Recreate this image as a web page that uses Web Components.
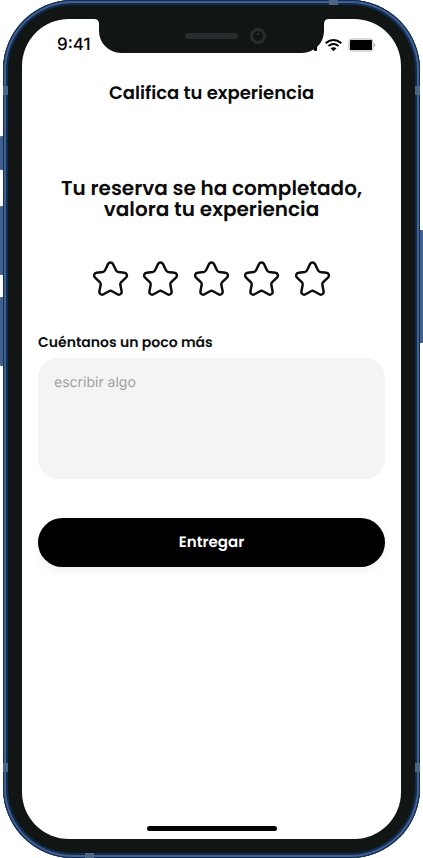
<!DOCTYPE html>
<html lang="es">
<head>
<meta charset="utf-8">
<meta name="viewport" content="width=device-width, initial-scale=1">
<title>Califica tu experiencia</title>
<style>
  body { margin: 0; background: #fff; color: #0c0c0c; font-family: Poppins, Inter, "Noto Sans", sans-serif; text-rendering: geometricPrecision; }
</style>
</head>
<body>
<phone-frame>
  <status-bar slot="status">9:41</status-bar>
  <rating-screen>
    <span slot="title">Califica tu experiencia</span>
    <span slot="message">Tu reserva se ha completado, valora tu experiencia</span>
    <star-rating></star-rating>
    <note-field label="Cuéntanos un poco más" placeholder="escribir algo"></note-field>
    <pill-button>Entregar</pill-button>
  </rating-screen>
</phone-frame>

<template id="phone-frame">
  <style>
    :host { display: block; padding: 0 3px; position: relative; }
    .case {
      box-sizing: border-box; min-height: 100vh; padding: 19px; border-radius: 70px;
      display: flex; position: relative; background: #111615;
      box-shadow: inset 0 0 0 1px #122c50, inset 0 0 0 3px #416190, inset 0 0 0 5px #122b50;
    }
    .screen {
      flex: 1; min-width: 0; display: flex; flex-direction: column;
      background: #fff; border-radius: 47px; position: relative;
    }
    .notch { position: absolute; top: 0; left: 50%; margin-left: -118px; width: 235px; height: 34px; }
    .home { width: 130px; height: 5px; border-radius: 3px; background: #000; margin: auto auto 8px; }
    .key { position: absolute; width: 3px; background: #416190; }
    .left { left: 0; border-radius: 1px 0 0 1px; }
    .right { right: 0; border-radius: 0 1px 1px 0; }
    .mute { top: 136px; height: 34px; }
    .up { top: 206px; height: 69px; }
    .down { top: 297px; height: 69px; }
    .power { top: 230px; height: 113px; }
    .band { position: absolute; background: #4b6583; }
    .v { width: 5px; height: 9px; }
    .h { width: 9px; height: 5px; }
    .l { left: 0; } .r { right: 0; }
    .hi { top: 86px; } .lo { bottom: 86px; }
    .t { top: 0; right: 82px; } .b { bottom: 0; left: 82px; }
  </style>
  <i class="key left mute"></i><i class="key left up"></i><i class="key left down"></i><i class="key right power"></i>
  <div class="case">
    <i class="band v l hi"></i><i class="band v r hi"></i><i class="band v l lo"></i><i class="band v r lo"></i>
    <i class="band h t"></i><i class="band h b"></i>
    <div class="screen">
      <slot name="status"></slot>
      <svg class="notch" viewBox="0 0 235 34" aria-hidden="true">
        <path d="M0 0Q5 0 5 5V12A22 22 0 0 0 27 34H208A22 22 0 0 0 230 12V5Q230 0 235 0Z" fill="#111615"/>
        <rect x="91" y="14" width="53" height="6" rx="3" fill="#292c2d"/>
        <circle cx="164" cy="17" r="6.5" fill="#111615" stroke="#292c2d" stroke-width="3"/>
        <circle cx="164" cy="15" r="1" fill="#34383a"/>
      </svg>
      <slot></slot>
      <div class="home"></div>
    </div>
  </div>
</template>

<template id="status-bar">
  <style>
    :host { display: flex; justify-content: space-between; align-items: center; height: 20px; padding: 16px 24px 0 35px; font: 500 17px/20px Inter, sans-serif; color: #000; }
    svg { width: 66px; height: 14px; }
  </style>
  <slot></slot>
  <svg viewBox="0 0 66 14" role="img" aria-label="Wi-Fi y batería">
    <rect x="3" y="2" width="3" height="11" rx="1" fill="#000"/>
    <g fill="none" stroke="#000" stroke-width="2">
      <path d="M14.7 5.1Q22.5-1.2 30.3 5.1"/>
      <path d="M17.5 8Q22.5 4 27.5 8"/>
    </g>
    <path d="M19.5 10.3Q22.5 8.1 25.5 10.3L22.5 13.2Z" fill="#000"/>
    <rect x="38" y="1" width="24" height="12" rx="3" fill="#fff" stroke="#b5b5b5"/>
    <rect x="39" y="2" width="22" height="10" rx="1" fill="#000"/>
    <path d="M63 5Q66 7 63 9Z" fill="#b5b5b5"/>
  </svg>
</template>

<template id="rating-screen">
  <style>
    :host { display: flex; flex-direction: column; padding: 0 16px; }
    h1, h2 { margin: 0; text-align: center; font-weight: 600; }
    h1 { font-size: 18px; line-height: 24px; margin-top: 27px; }
    h2 { font-size: 20px; line-height: 21px; margin: 72px 16px 41px; text-wrap: balance; }
  </style>
  <h1><slot name="title"></slot></h1>
  <h2><slot name="message"></slot></h2>
  <slot></slot>
</template>

<template id="star-rating">
  <style>
    :host { display: block; }
    fieldset { border: 0; margin: 0 auto; padding: 0; display: flex; justify-content: space-between; max-width: 238px; }
    label { position: relative; width: 36px; height: 36px; cursor: pointer; }
    input { position: absolute; inset: 0; margin: 0; opacity: 0; width: 100%; height: 100%; cursor: pointer; }
    svg { display: block; width: 36px; height: 36px; fill: none; stroke: #0c0c0c; stroke-width: 2.5; stroke-linejoin: round; }
    label:has(:focus-visible) { outline: 2px solid #416190; border-radius: 8px; }
    label:has(~ label :checked) svg, label:has(:checked) svg { fill: #0c0c0c; }
  </style>
  <fieldset aria-label="Valoración"></fieldset>
</template>

<template id="star">
  <label><input type="radio" name="stars">
    <svg viewBox="0 0 37 37" aria-hidden="true"><path d="M15.4 3.2C16.4 1.1 19.6 1.1 20.6 3.2L23.6 9.5C24.1 10.5 24.9 11.1 26 11.3L32.2 12.1C34.8 12.4 35.8 15.2 33.9 17L29 21.7C28.2 22.5 27.9 23.4 28.1 24.5L29.4 31C29.9 33.6 27.4 35.4 25.2 34.2L19.6 31.1C18.6 30.5 17.4 30.5 16.4 31.1L10.8 34.2C8.6 35.4 6.1 33.6 6.6 31L7.9 24.5C8.1 23.4 7.8 22.5 7 21.7L2.1 17C.2 15.2 1.2 12.4 3.8 12.1L10 11.3C11.1 11.1 11.9 10.5 12.4 9.5Z"/></svg>
  </label>
</template>

<template id="note-field">
  <style>
    :host { display: flex; flex-direction: column; margin-top: 35px; }
    label { font-size: 14px; line-height: 20px; font-weight: 600; margin-bottom: 6px; }
    textarea { box-sizing: border-box; width: 100%; height: 121px; border: 0; border-radius: 20px; padding: 16px; background: #f4f4f4; resize: none; font: 400 14px/17px Inter, sans-serif; color: #0c0c0c; display: block; text-rendering: inherit; }
    textarea::placeholder { color: #a0a0a0; opacity: 1; }
  </style>
  <label for="note"></label>
  <textarea id="note"></textarea>
</template>

<template id="pill-button">
  <style>
    :host { display: block; margin-top: 39px; }
    button { width: 100%; height: 49px; border: 0; border-radius: 25px; background: #000; color: #fff; font: inherit; font-size: 15px; font-weight: 600; box-shadow: 0 4px 10px rgba(0, 0, 0, .06); cursor: pointer; text-rendering: inherit; }
  </style>
  <button type="button"><slot></slot></button>
</template>

<script>
  class TemplateElement extends HTMLElement {
    constructor() {
      super();
      this.attachShadow({ mode: "open" }).append(
        document.getElementById(this.localName).content.cloneNode(true));
    }
  }
  customElements.define("phone-frame", class extends TemplateElement {});
  customElements.define("status-bar", class extends TemplateElement {});
  customElements.define("rating-screen", class extends TemplateElement {});
  customElements.define("pill-button", class extends TemplateElement {});
  customElements.define("star-rating", class extends TemplateElement {
    connectedCallback() {
      const group = this.shadowRoot.querySelector("fieldset");
      if (group.children.length) return;
      for (let n = 1; n <= 5; n++) {
        const star = document.getElementById("star").content.cloneNode(true);
        const input = star.querySelector("input");
        input.value = n;
        input.setAttribute("aria-label", n === 1 ? "1 estrella" : n + " estrellas");
        group.append(star);
      }
    }
  });
  customElements.define("note-field", class extends TemplateElement {
    connectedCallback() {
      this.shadowRoot.querySelector("label").textContent = this.getAttribute("label");
      this.shadowRoot.querySelector("textarea").placeholder = this.getAttribute("placeholder");
    }
  });
</script>
</body>
</html>
